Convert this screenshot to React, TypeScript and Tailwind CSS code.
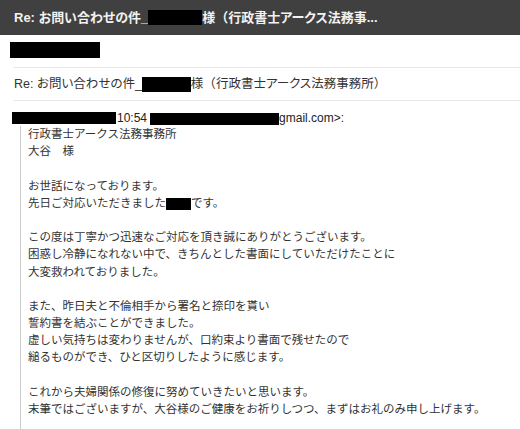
import React from "react";

const Box = ({ w, h = 15 }: { w: number; h?: number }) => (
  <span className="inline-block bg-black align-middle" style={{ width: w, height: h }} />
);

const P = ({ children }: { children: React.ReactNode }) => (
  <span className="[font-feature-settings:normal]">{children}</span>
);

const lines: (string | React.ReactNode)[] = [
  "行政書士アークス法務事務所",
  "大谷　様",
  "",
  "お世話になっております。",
  <>先日ご対応いただきました<Box w={25} h={12} />です。</>,
  "",
  "この度は丁寧かつ迅速なご対応を頂き誠にありがとうございます。",
  "困惑し冷静になれない中で、きちんとした書面にしていただけたことに",
  "大変救われておりました。",
  "",
  "また、昨日夫と不倫相手から署名と捺印を貰い",
  "誓約書を結ぶことができました。",
  "虚しい気持ちは変わりませんが、口約束より書面で残せたので",
  "縋るものができ、ひと区切りしたように感じます。",
  "",
  "これから夫婦関係の修復に努めていきたいと思います。",
  "末筆ではございますが、大谷様のご健康をお祈りしつつ、まずはお礼のみ申し上げます。",
];

export default function App() {
  return (
    <div className="w-[520px] h-[429px] overflow-hidden bg-white font-['Liberation_Sans','Noto_Sans_CJK_JP',sans-serif]">
      <div className="h-[35px] bg-[#404040] flex items-center pl-[14px] text-[13px] font-bold text-[#f2f2f2] whitespace-nowrap [font-feature-settings:'palt']">
        Re: お問い合わせの件_<Box w={54} h={15} />様<P>（</P>行政書士アークス法務事...
      </div>
      <div className="pt-[7px] pl-[10px]">
        <div className="w-[90px] h-[16px] bg-black" />
      </div>
      <div className="ml-[14px] mt-[9px] border-t border-[#e6e6e6]" />
      <div className="h-[32px] flex items-center pl-[14px] text-[12.5px] text-[#333] whitespace-nowrap [font-feature-settings:'palt']">
        Re: お問い合わせの件_<Box w={49} h={15} />様<P>（</P>行政書士アークス法務事務所<P>）</P>
      </div>
      <div className="ml-[14px] border-t border-[#e6e6e6]" />
      <div className="mt-[11px] pl-[12px] flex items-center text-[12px] text-[#222] whitespace-nowrap h-[12px]">
        <Box w={104} h={12} />
        <span className="ml-[1px]">10:54</span>
        <span className="ml-[3px]"><Box w={129} h={12} /></span>
        <span>gmail.com&gt;:</span>
      </div>
      <div className="ml-[20px] mt-[2px] border-l border-[#cccccc] pl-[7px] pb-[20px] text-[11.5px] leading-[17.2px] text-[#333] whitespace-nowrap">
        {lines.map((l, i) => (
          <div key={i} className="h-[17.2px]">{l}</div>
        ))}
      </div>
    </div>
  );
}
